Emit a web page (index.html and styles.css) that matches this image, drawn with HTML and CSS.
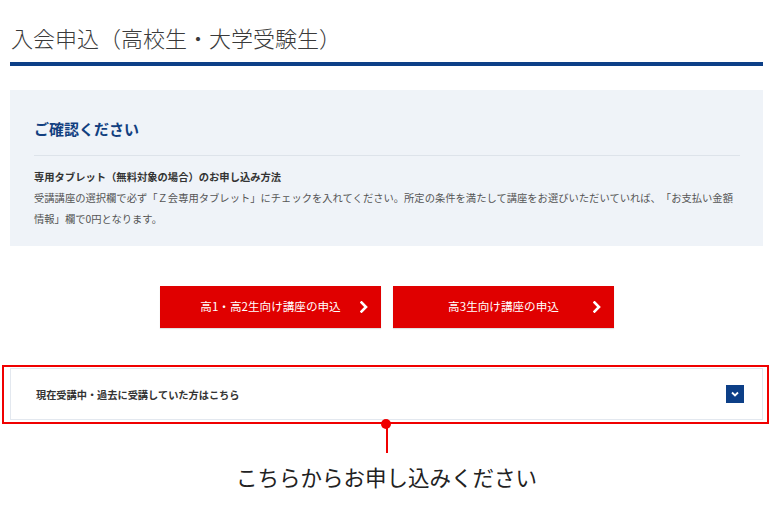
FILE: index.html
```html
<!DOCTYPE html>
<html lang="ja">
<head>
<meta charset="utf-8">
<title>入会申込（高校生・大学受験生）</title>
<link rel="stylesheet" href="styles.css">
</head>
<body>
<main class="page">
  <h1 class="title">入会申込（高校生・大学受験生）</h1>

  <section class="notice">
    <h2 class="notice-heading">ご確認ください</h2>
    <h3 class="notice-sub">専用タブレット（無料対象の場合）のお申し込み方法</h3>
    <p class="notice-text">受講講座の選択欄で必ず「Ｚ会専用タブレット」にチェックを入れてください。所定の条件を満たして講座をお選びいただいていれば、「お支払い金額情報」欄で0円となります。</p>
  </section>

  <div class="buttons">
    <a class="btn" href="#">高1・高2生向け講座の申込
      <svg class="btn-chev" width="8" height="12" viewBox="0 0 8 12"><polyline points="1.5,1.5 6,6 1.5,10.5" fill="none" stroke="#fff" stroke-width="2.6" stroke-linecap="square"/></svg>
    </a>
    <a class="btn" href="#">高3生向け講座の申込
      <svg class="btn-chev" width="8" height="12" viewBox="0 0 8 12"><polyline points="1.5,1.5 6,6 1.5,10.5" fill="none" stroke="#fff" stroke-width="2.6" stroke-linecap="square"/></svg>
    </a>
  </div>

  <div class="acc-wrap">
    <div class="accordion">
      <span class="acc-label">現在受講中・過去に受講していた方はこちら</span>
      <span class="acc-icon">
        <svg width="18" height="18" viewBox="0 0 18 18"><polyline points="6,7.5 9,10.5 12,7.5" fill="none" stroke="#fff" stroke-width="1.8"/></svg>
      </span>
    </div>
    <div class="highlight"></div>
    <div class="dot"></div>
  </div>

  <div class="callout">
    <div class="callout-line"></div>
    <p class="callout-text">こちらからお申し込みください</p>
  </div>
</main>
</body>
</html>
```

FILE: styles.css
```css
* { box-sizing: border-box; }
html, body { margin: 0; padding: 0; background: #fff; }
body {
  font-family: "Noto Sans CJK JP", "Noto Sans", sans-serif;
  color: #333;
  text-spacing-trim: space-all;
}
.page {
  width: 753px;
  margin-left: 10px;
}
.title {
  margin: 0;
  padding: 19px 0 0 1px;
  height: 66px;
  font-size: 22px;
  line-height: 36px;
  font-weight: 300;
  color: #3a3a3a;
  border-bottom: 4px solid #0d3f87;
}
.notice {
  margin-top: 24px;
  background: #eff3f8;
  padding: 28px 23px 17px 24px;
  height: 156px;
}
.notice-heading {
  margin: 0;
  font-size: 15px;
  line-height: 22px;
  font-weight: 700;
  color: #123f80;
  padding-bottom: 15px;
  border-bottom: 1px solid #dde3ea;
}
.notice-sub {
  margin: 11px 0 0;
  font-size: 10.3px;
  line-height: 20px;
  font-weight: 700;
  color: #333;
}
.notice-text {
  margin: 0;
  font-size: 10.3px;
  line-height: 21px;
  color: #555;
}
.buttons {
  display: flex;
  justify-content: center;
  gap: 12px;
  margin-top: 40px;
  padding-left: 1px;
}
.btn {
  position: relative;
  display: flex;
  align-items: center;
  justify-content: center;
  width: 221px;
  height: 42px;
  background: #e00000;
  color: #fff;
  text-decoration: none;
  font-size: 11.6px;
  line-height: 1;
  padding-bottom: 1px;
  box-shadow: 0 1px 1px rgba(0,0,0,0.12);
}
.btn-chev {
  position: absolute;
  right: 13px;
  top: 15px;
}
.acc-wrap {
  position: relative;
  margin-top: 40px;
}
.accordion {
  display: flex;
  align-items: center;
  justify-content: space-between;
  height: 52px;
  border: 1px solid #e3e8ef;
  padding: 0 18px 0 25px;
  background: #fff;
}
.acc-label {
  font-size: 10.2px;
  font-weight: 700;
  color: #333;
}
.acc-icon {
  display: block;
  width: 18px;
  height: 18px;
  background: #0d3f87;
}
.acc-icon svg { display: block; }
.highlight {
  position: absolute;
  left: -8px;
  right: -6px;
  top: -3px;
  bottom: -4px;
  border: 2px solid #f00000;
  pointer-events: none;
}
.dot {
  position: absolute;
  left: 371px;
  bottom: -9px;
  width: 10px;
  height: 10px;
  border-radius: 50%;
  background: #f00000;
}
.callout {
  display: flex;
  flex-direction: column;
  align-items: center;
}
.callout-line {
  width: 2px;
  height: 29px;
  margin-top: 4px;
  background: #f00000;
}
.callout-text {
  margin: 8px 0 0;
  font-size: 21.5px;
  line-height: 32px;
  color: #222;
  font-weight: 400;
}
```
